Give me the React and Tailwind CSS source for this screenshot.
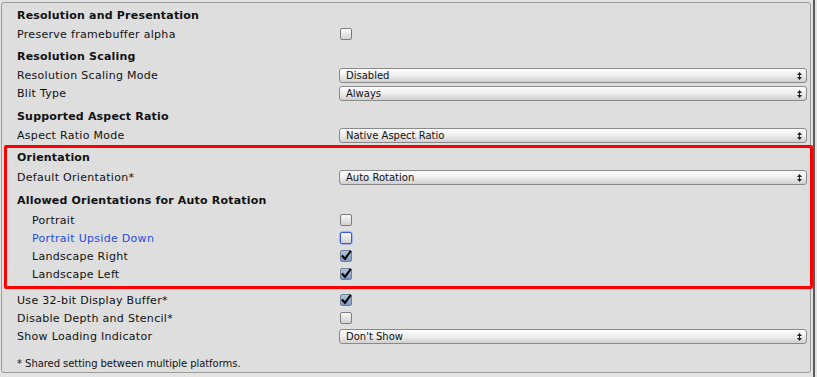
import React from "react";

const FONT = { fontFamily: '"DejaVu Sans", Verdana, sans-serif' };

function Arrows() {
  return (
    <svg width="5" height="8" viewBox="0 0 5 8" className="shrink-0">
      <polygon points="0,3 2.5,0 5,3" fill="#222" />
      <rect x="2" y="3" width="1" height="2" fill="#222" />
      <polygon points="0,5 2.5,8 5,5" fill="#222" />
    </svg>
  );
}

function Dropdown({ value }) {
  return (
    <div className="mt-[2px] flex h-[15px] w-[468px] items-center justify-between rounded-[3px] border border-[#8a8a8a] bg-gradient-to-b from-[#fdfdfd] via-[#ededed] to-[#d0d0d0] pl-[6px] pr-[4px]">
      <span className="pt-[1px] text-[10px] leading-none text-[#111]">{value}</span>
      <Arrows />
    </div>
  );
}

function Checkbox({ checked, focused }) {
  if (checked) {
    return (
      <div className="relative ml-[1px] h-[12px] w-[12px] rounded-[2px] border border-[#6f7f96] bg-gradient-to-b from-[#b3c4dc] to-[#7e99c0]">
        <svg width="12" height="12" viewBox="0 0 12 12" className="absolute left-[-1px] top-[-1px] overflow-visible">
          <path d="M2.6 6.2 L5 8.8 L10.2 1.8" stroke="#000" strokeWidth="2.1" fill="none" strokeLinecap="square" />
        </svg>
      </div>
    );
  }
  return (
    <div
      className={
        focused
          ? "ml-[1px] h-[12px] w-[12px] rounded-[2px] border border-[#3557e6] bg-gradient-to-b from-[#fafafa] to-[#d2d2d2] shadow-[0_0_0_0.5px_#6f8cf0]"
          : "ml-[1px] h-[12px] w-[12px] rounded-[2px] border border-[#7c7c7c] bg-gradient-to-b from-[#fafafa] to-[#d2d2d2]"
      }
    />
  );
}

function Header({ children, className = "" }) {
  return (
    <div className={"flex h-[18px] items-center pl-[15px] pt-[2px] text-[11px] font-bold tracking-[0.2px] text-[#111] " + className}>
      {children}
    </div>
  );
}

function Row({ label, children, className = "", indent = false, blue = false, align = "center" }) {
  return (
    <div className={"flex h-[18px] " + (align === "center" ? "items-center " : "items-start ") + className}>
      <div
        className={
          "flex h-[18px] w-[337px] shrink-0 items-center pt-[2px] text-[11px] tracking-[0.3px] " +
          (indent ? "pl-[30px] " : "pl-[15px] ") +
          (blue ? "text-[#1f4de0]" : "text-[#111]")
        }
      >
        {label}
      </div>
      {children}
    </div>
  );
}

export default function App() {
  return (
    <div className="flex h-[377px] w-[817px] overflow-hidden bg-[#e3e3e3]" style={FONT}>
      <div className="w-[813px] shrink-0 pl-[1px] pt-[2px]">
        <div className="flex h-[371px] w-[810px] flex-col rounded-[3px] border border-[#9c9c9c] bg-[#dedede] pt-[3px]">
          <Header>Resolution and Presentation</Header>
          <Row label="Preserve framebuffer alpha" className="mt-[1px]">
            <Checkbox />
          </Row>
          <Header className="mt-[4px]">Resolution Scaling</Header>
          <Row label="Resolution Scaling Mode" className="mt-[1px]" align="start">
            <Dropdown value="Disabled" />
          </Row>
          <Row label="Blit Type" align="start">
            <Dropdown value="Always" />
          </Row>
          <Header className="mt-[5px]">Supported Aspect Ratio</Header>
          <Row label="Aspect Ratio Mode" className="mt-[1px]" align="start">
            <Dropdown value="Native Aspect Ratio" />
          </Row>

          <div className="relative mt-[4px] flex flex-col">
            <div className="pointer-events-none absolute left-[2px] top-[-3px] h-[144px] w-[809px] rounded-[2px] border-[3px] border-[#ff0000]" />
            <Header>Orientation</Header>
            <Row label="Default Orientation*" className="mt-[2px]" align="start">
              <Dropdown value="Auto Rotation" />
            </Row>
            <Header className="mt-[5px]">Allowed Orientations for Auto Rotation</Header>
            <Row label="Portrait" indent className="mt-[2px]">
              <Checkbox />
            </Row>
            <Row label="Portrait Upside Down" indent blue>
              <Checkbox focused />
            </Row>
            <Row label="Landscape Right" indent>
              <Checkbox checked />
            </Row>
            <Row label="Landscape Left" indent>
              <Checkbox checked />
            </Row>
          </div>

          <Row label="Use 32-bit Display Buffer*" className="mt-[8px]">
            <Checkbox checked />
          </Row>
          <Row label="Disable Depth and Stencil*">
            <Checkbox />
          </Row>
          <Row label="Show Loading Indicator" align="start">
            <Dropdown value="Don't Show" />
          </Row>
          <div className="mt-[9px] flex h-[18px] items-center pl-[15px] pt-[1px] text-[10px] tracking-[-0.05px] text-[#111]">
            * Shared setting between multiple platforms.
          </div>
        </div>
      </div>
      <div className="w-[2px] shrink-0 bg-[#5a5a5a]" />
      <div className="flex-1 bg-[#e3e3e3]" />
    </div>
  );
}
